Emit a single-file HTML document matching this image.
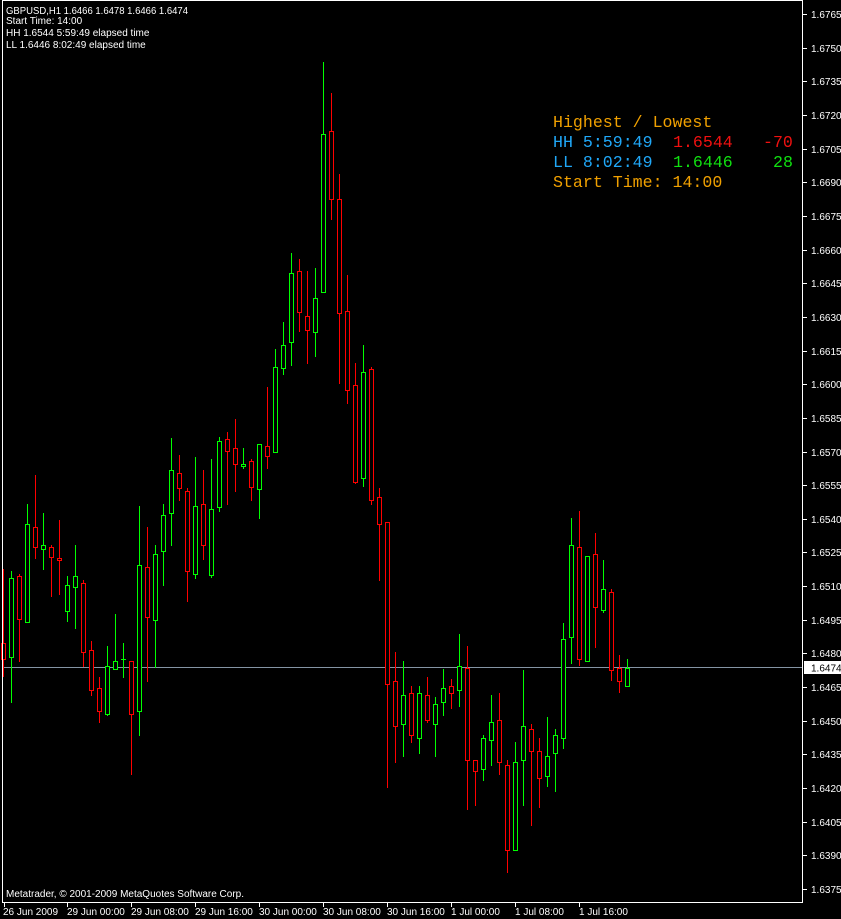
<!DOCTYPE html>
<html><head><meta charset="utf-8"><style>
html,body{margin:0;padding:0;background:#000;width:841px;height:919px;overflow:hidden}
svg{display:block}
.s{font-family:"Liberation Sans",sans-serif;font-size:10px;fill:#fff;white-space:pre}
.m{font-family:"Liberation Mono",monospace;font-size:16.6px;white-space:pre}
.g line,.g rect{stroke:#00ff00;fill:#000}
.r line,.r rect{stroke:#ff0000;fill:#000}
</style></head><body>
<svg width="841" height="919" xmlns="http://www.w3.org/2000/svg" shape-rendering="crispEdges" xml:space="preserve">
<rect width="841" height="919" fill="#000"/>
<line x1="3" y1="667.5" x2="802" y2="667.5" stroke="#8494a4"/>
<g stroke-width="1">
<g class="r"><line x1="3.5" y1="569" x2="3.5" y2="677"/><rect x="1.5" y="643.5" width="4" height="16"/></g>
<g class="g"><line x1="11.5" y1="571" x2="11.5" y2="703"/><rect x="9.5" y="578.5" width="4" height="79"/></g>
<g class="r"><line x1="19.5" y1="574" x2="19.5" y2="662"/><rect x="17.5" y="576.5" width="4" height="43"/></g>
<g class="g"><line x1="27.5" y1="504" x2="27.5" y2="622"/><rect x="25.5" y="524.5" width="4" height="98"/></g>
<g class="r"><line x1="35.5" y1="475" x2="35.5" y2="559"/><rect x="33.5" y="527.5" width="4" height="20"/></g>
<g class="g"><line x1="43.5" y1="513" x2="43.5" y2="570"/><rect x="41.5" y="545.5" width="4" height="4"/></g>
<g class="r"><line x1="51.5" y1="545" x2="51.5" y2="597"/><rect x="49.5" y="547.5" width="4" height="10"/></g>
<g class="r"><line x1="59.5" y1="520" x2="59.5" y2="595"/><rect x="57.5" y="558.5" width="4" height="2"/></g>
<g class="g"><line x1="67.5" y1="576" x2="67.5" y2="622"/><rect x="65.5" y="585.5" width="4" height="26"/></g>
<g class="g"><line x1="75.5" y1="545" x2="75.5" y2="629"/><rect x="73.5" y="576.5" width="4" height="11"/></g>
<g class="r"><line x1="83.5" y1="580" x2="83.5" y2="667"/><rect x="81.5" y="583.5" width="4" height="69"/></g>
<g class="r"><line x1="91.5" y1="641" x2="91.5" y2="696"/><rect x="89.5" y="650.5" width="4" height="40"/></g>
<g class="r"><line x1="99.5" y1="677" x2="99.5" y2="723"/><rect x="97.5" y="688.5" width="4" height="23"/></g>
<g class="g"><line x1="107.5" y1="646" x2="107.5" y2="716"/><rect x="105.5" y="666.5" width="4" height="48"/></g>
<g class="g"><line x1="115.5" y1="614" x2="115.5" y2="669"/><rect x="113.5" y="661.5" width="4" height="8"/></g>
<g class="g"><line x1="123.5" y1="643" x2="123.5" y2="678"/><line x1="121" y1="659.5" x2="126" y2="659.5"/></g>
<g class="r"><line x1="131.5" y1="661" x2="131.5" y2="775"/><rect x="129.5" y="661.5" width="4" height="53"/></g>
<g class="g"><line x1="139.5" y1="506" x2="139.5" y2="736"/><rect x="137.5" y="565.5" width="4" height="146"/></g>
<g class="r"><line x1="147.5" y1="527" x2="147.5" y2="682"/><rect x="145.5" y="567.5" width="4" height="50"/></g>
<g class="g"><line x1="155.5" y1="545" x2="155.5" y2="668"/><rect x="153.5" y="554.5" width="4" height="66"/></g>
<g class="g"><line x1="163.5" y1="504" x2="163.5" y2="586"/><rect x="161.5" y="515.5" width="4" height="36"/></g>
<g class="g"><line x1="171.5" y1="438" x2="171.5" y2="546"/><rect x="169.5" y="470.5" width="4" height="43"/></g>
<g class="r"><line x1="179.5" y1="455" x2="179.5" y2="501"/><rect x="177.5" y="473.5" width="4" height="15"/></g>
<g class="r"><line x1="187.5" y1="488" x2="187.5" y2="602"/><rect x="185.5" y="491.5" width="4" height="80"/></g>
<g class="g"><line x1="195.5" y1="457" x2="195.5" y2="579"/><rect x="193.5" y="506.5" width="4" height="68"/></g>
<g class="r"><line x1="203.5" y1="470" x2="203.5" y2="560"/><rect x="201.5" y="504.5" width="4" height="41"/></g>
<g class="g"><line x1="211.5" y1="459" x2="211.5" y2="578"/><rect x="209.5" y="509.5" width="4" height="66"/></g>
<g class="g"><line x1="219.5" y1="437" x2="219.5" y2="512"/><rect x="217.5" y="441.5" width="4" height="66"/></g>
<g class="r"><line x1="227.5" y1="432" x2="227.5" y2="505"/><rect x="225.5" y="439.5" width="4" height="12"/></g>
<g class="r"><line x1="235.5" y1="419" x2="235.5" y2="492"/><rect x="233.5" y="448.5" width="4" height="16"/></g>
<g class="g"><line x1="243.5" y1="448" x2="243.5" y2="469"/><rect x="241.5" y="464.5" width="4" height="2"/></g>
<g class="r"><line x1="251.5" y1="459" x2="251.5" y2="501"/><rect x="249.5" y="461.5" width="4" height="26"/></g>
<g class="g"><line x1="259.5" y1="444" x2="259.5" y2="519"/><rect x="257.5" y="444.5" width="4" height="45"/></g>
<g class="r"><line x1="267.5" y1="387" x2="267.5" y2="469"/><rect x="265.5" y="446.5" width="4" height="10"/></g>
<g class="g"><line x1="275.5" y1="349" x2="275.5" y2="452"/><rect x="273.5" y="367.5" width="4" height="85"/></g>
<g class="g"><line x1="283.5" y1="322" x2="283.5" y2="375"/><rect x="281.5" y="345.5" width="4" height="23"/></g>
<g class="g"><line x1="291.5" y1="253" x2="291.5" y2="366"/><rect x="289.5" y="273.5" width="4" height="69"/></g>
<g class="r"><line x1="299.5" y1="259" x2="299.5" y2="332"/><rect x="297.5" y="271.5" width="4" height="41"/></g>
<g class="r"><line x1="307.5" y1="271" x2="307.5" y2="364"/><rect x="305.5" y="316.5" width="4" height="14"/></g>
<g class="g"><line x1="315.5" y1="268" x2="315.5" y2="357"/><rect x="313.5" y="298.5" width="4" height="34"/></g>
<g class="g"><line x1="323.5" y1="62" x2="323.5" y2="292"/><rect x="321.5" y="134.5" width="4" height="158"/></g>
<g class="r"><line x1="331.5" y1="93" x2="331.5" y2="220"/><rect x="329.5" y="131.5" width="4" height="68"/></g>
<g class="r"><line x1="339.5" y1="174" x2="339.5" y2="384"/><rect x="337.5" y="199.5" width="4" height="114"/></g>
<g class="r"><line x1="347.5" y1="275" x2="347.5" y2="404"/><rect x="345.5" y="311.5" width="4" height="79"/></g>
<g class="r"><line x1="355.5" y1="363" x2="355.5" y2="484"/><rect x="353.5" y="385.5" width="4" height="97"/></g>
<g class="g"><line x1="363.5" y1="345" x2="363.5" y2="487"/><rect x="361.5" y="372.5" width="4" height="106"/></g>
<g class="r"><line x1="371.5" y1="367" x2="371.5" y2="505"/><rect x="369.5" y="369.5" width="4" height="131"/></g>
<g class="r"><line x1="379.5" y1="488" x2="379.5" y2="581"/><rect x="377.5" y="497.5" width="4" height="27"/></g>
<g class="r"><line x1="387.5" y1="522" x2="387.5" y2="788"/><rect x="385.5" y="522.5" width="4" height="162"/></g>
<g class="r"><line x1="395.5" y1="652" x2="395.5" y2="763"/><rect x="393.5" y="681.5" width="4" height="45"/></g>
<g class="g"><line x1="403.5" y1="661" x2="403.5" y2="757"/><rect x="401.5" y="695.5" width="4" height="29"/></g>
<g class="r"><line x1="411.5" y1="686" x2="411.5" y2="743"/><rect x="409.5" y="693.5" width="4" height="42"/></g>
<g class="g"><line x1="419.5" y1="686" x2="419.5" y2="754"/><rect x="417.5" y="693.5" width="4" height="45"/></g>
<g class="r"><line x1="427.5" y1="677" x2="427.5" y2="723"/><rect x="425.5" y="695.5" width="4" height="25"/></g>
<g class="g"><line x1="435.5" y1="697" x2="435.5" y2="757"/><rect x="433.5" y="704.5" width="4" height="20"/></g>
<g class="g"><line x1="443.5" y1="669" x2="443.5" y2="716"/><rect x="441.5" y="688.5" width="4" height="14"/></g>
<g class="r"><line x1="451.5" y1="679" x2="451.5" y2="709"/><rect x="449.5" y="686.5" width="4" height="7"/></g>
<g class="g"><line x1="459.5" y1="634" x2="459.5" y2="707"/><rect x="457.5" y="666.5" width="4" height="24"/></g>
<g class="r"><line x1="467.5" y1="646" x2="467.5" y2="810"/><rect x="465.5" y="668.5" width="4" height="92"/></g>
<g class="r"><line x1="475.5" y1="760" x2="475.5" y2="806"/><rect x="473.5" y="760.5" width="4" height="11"/></g>
<g class="g"><line x1="483.5" y1="735" x2="483.5" y2="781"/><rect x="481.5" y="738.5" width="4" height="31"/></g>
<g class="g"><line x1="491.5" y1="695" x2="491.5" y2="766"/><rect x="489.5" y="722.5" width="4" height="18"/></g>
<g class="r"><line x1="499.5" y1="693" x2="499.5" y2="775"/><rect x="497.5" y="720.5" width="4" height="42"/></g>
<g class="r"><line x1="507.5" y1="760" x2="507.5" y2="873"/><rect x="505.5" y="765.5" width="4" height="85"/></g>
<g class="g"><line x1="515.5" y1="742" x2="515.5" y2="850"/><rect x="513.5" y="762.5" width="4" height="88"/></g>
<g class="g"><line x1="523.5" y1="670" x2="523.5" y2="806"/><rect x="521.5" y="726.5" width="4" height="34"/></g>
<g class="r"><line x1="531.5" y1="724" x2="531.5" y2="826"/><rect x="529.5" y="729.5" width="4" height="22"/></g>
<g class="r"><line x1="539.5" y1="738" x2="539.5" y2="808"/><rect x="537.5" y="751.5" width="4" height="27"/></g>
<g class="g"><line x1="547.5" y1="717" x2="547.5" y2="787"/><rect x="545.5" y="756.5" width="4" height="20"/></g>
<g class="g"><line x1="555.5" y1="729" x2="555.5" y2="792"/><rect x="553.5" y="735.5" width="4" height="18"/></g>
<g class="g"><line x1="563.5" y1="623" x2="563.5" y2="749"/><rect x="561.5" y="639.5" width="4" height="99"/></g>
<g class="g"><line x1="571.5" y1="518" x2="571.5" y2="664"/><rect x="569.5" y="545.5" width="4" height="92"/></g>
<g class="r"><line x1="579.5" y1="511" x2="579.5" y2="666"/><rect x="577.5" y="547.5" width="4" height="112"/></g>
<g class="g"><line x1="587.5" y1="556" x2="587.5" y2="661"/><rect x="585.5" y="556.5" width="4" height="105"/></g>
<g class="r"><line x1="595.5" y1="533" x2="595.5" y2="648"/><rect x="593.5" y="554.5" width="4" height="53"/></g>
<g class="g"><line x1="603.5" y1="560" x2="603.5" y2="613"/><rect x="601.5" y="589.5" width="4" height="21"/></g>
<g class="r"><line x1="611.5" y1="589" x2="611.5" y2="681"/><rect x="609.5" y="592.5" width="4" height="78"/></g>
<g class="r"><line x1="619.5" y1="655" x2="619.5" y2="693"/><rect x="617.5" y="668.5" width="4" height="13"/></g>
<g class="g"><line x1="627.5" y1="659" x2="627.5" y2="686"/><rect x="625.5" y="668.5" width="4" height="18"/></g>
</g>
<line x1="2.5" y1="0" x2="2.5" y2="903" stroke="#fff"/>
<line x1="2" y1="0.5" x2="803" y2="0.5" stroke="#fff"/>
<line x1="802.5" y1="0" x2="802.5" y2="903" stroke="#fff"/>
<line x1="2" y1="902.5" x2="803" y2="902.5" stroke="#fff"/>
<g stroke="#fff">
<line x1="803" y1="14.5" x2="807" y2="14.5"/><line x1="803" y1="48.5" x2="807" y2="48.5"/><line x1="803" y1="81.5" x2="807" y2="81.5"/><line x1="803" y1="115.5" x2="807" y2="115.5"/><line x1="803" y1="149.5" x2="807" y2="149.5"/><line x1="803" y1="182.5" x2="807" y2="182.5"/><line x1="803" y1="216.5" x2="807" y2="216.5"/><line x1="803" y1="250.5" x2="807" y2="250.5"/><line x1="803" y1="283.5" x2="807" y2="283.5"/><line x1="803" y1="317.5" x2="807" y2="317.5"/><line x1="803" y1="351.5" x2="807" y2="351.5"/><line x1="803" y1="384.5" x2="807" y2="384.5"/><line x1="803" y1="418.5" x2="807" y2="418.5"/><line x1="803" y1="452.5" x2="807" y2="452.5"/><line x1="803" y1="485.5" x2="807" y2="485.5"/><line x1="803" y1="519.5" x2="807" y2="519.5"/><line x1="803" y1="552.5" x2="807" y2="552.5"/><line x1="803" y1="586.5" x2="807" y2="586.5"/><line x1="803" y1="620.5" x2="807" y2="620.5"/><line x1="803" y1="653.5" x2="807" y2="653.5"/><line x1="803" y1="687.5" x2="807" y2="687.5"/><line x1="803" y1="721.5" x2="807" y2="721.5"/><line x1="803" y1="754.5" x2="807" y2="754.5"/><line x1="803" y1="788.5" x2="807" y2="788.5"/><line x1="803" y1="822.5" x2="807" y2="822.5"/><line x1="803" y1="855.5" x2="807" y2="855.5"/><line x1="803" y1="889.5" x2="807" y2="889.5"/>
</g>
<g class="s">
<text x="811" y="18">1.6765</text><text x="811" y="52">1.6750</text><text x="811" y="85">1.6735</text><text x="811" y="119">1.6720</text><text x="811" y="153">1.6705</text><text x="811" y="186">1.6690</text><text x="811" y="220">1.6675</text><text x="811" y="254">1.6660</text><text x="811" y="287">1.6645</text><text x="811" y="321">1.6630</text><text x="811" y="355">1.6615</text><text x="811" y="388">1.6600</text><text x="811" y="422">1.6585</text><text x="811" y="456">1.6570</text><text x="811" y="489">1.6555</text><text x="811" y="523">1.6540</text><text x="811" y="556">1.6525</text><text x="811" y="590">1.6510</text><text x="811" y="624">1.6495</text><text x="811" y="657">1.6480</text><text x="811" y="691">1.6465</text><text x="811" y="725">1.6450</text><text x="811" y="758">1.6435</text><text x="811" y="792">1.6420</text><text x="811" y="826">1.6405</text><text x="811" y="859">1.6390</text><text x="811" y="893">1.6375</text>
</g>
<rect x="804" y="661" width="37" height="13" fill="#fff"/>
<text x="811" y="671.5" class="s" style="fill:#000">1.6474</text>
<g stroke="#fff">
<line x1="4.5" y1="903" x2="4.5" y2="907"/><line x1="67.5" y1="903" x2="67.5" y2="907"/><line x1="131.5" y1="903" x2="131.5" y2="907"/><line x1="195.5" y1="903" x2="195.5" y2="907"/><line x1="259.5" y1="903" x2="259.5" y2="907"/><line x1="323.5" y1="903" x2="323.5" y2="907"/><line x1="387.5" y1="903" x2="387.5" y2="907"/><line x1="451.5" y1="903" x2="451.5" y2="907"/><line x1="515.5" y1="903" x2="515.5" y2="907"/><line x1="579.5" y1="903" x2="579.5" y2="907"/>
</g>
<g class="s">
<text x="3" y="915">26 Jun 2009</text><text x="67" y="915">29 Jun 00:00</text><text x="131" y="915">29 Jun 08:00</text><text x="195" y="915">29 Jun 16:00</text><text x="259" y="915">30 Jun 00:00</text><text x="323" y="915">30 Jun 08:00</text><text x="387" y="915">30 Jun 16:00</text><text x="451" y="915">1 Jul 00:00</text><text x="515" y="915">1 Jul 08:00</text><text x="579" y="915">1 Jul 16:00</text>
</g>
<text x="6" y="897" class="s" textLength="238" lengthAdjust="spacingAndGlyphs">Metatrader, © 2001-2009 MetaQuotes Software Corp.</text>
<g class="s" style="font-weight:400">
<text x="6" y="14" textLength="182" lengthAdjust="spacingAndGlyphs">GBPUSD,H1  1.6466 1.6478 1.6466 1.6474</text>
<text x="6" y="24">Start Time: 14:00</text>
<text x="6" y="36">HH 1.6544  5:59:49 elapsed time</text>
<text x="6" y="48">LL 1.6446  8:02:49 elapsed time</text>
</g>
<g class="m" shape-rendering="auto">
<text x="553" y="127" fill="#f0a000">Highest / Lowest</text>
<text x="553" y="147" fill="#20a8f8">HH 5:59:49</text>
<text x="673" y="147" fill="#f01010">1.6544</text>
<text x="763" y="147" fill="#f01010">-70</text>
<text x="553" y="167" fill="#20a8f8">LL 8:02:49</text>
<text x="673" y="167" fill="#10e010">1.6446</text>
<text x="773" y="167" fill="#10e010">28</text>
<text x="553" y="187" fill="#f0a000">Start Time: 14:00</text>
</g>
</svg>
</body></html>
